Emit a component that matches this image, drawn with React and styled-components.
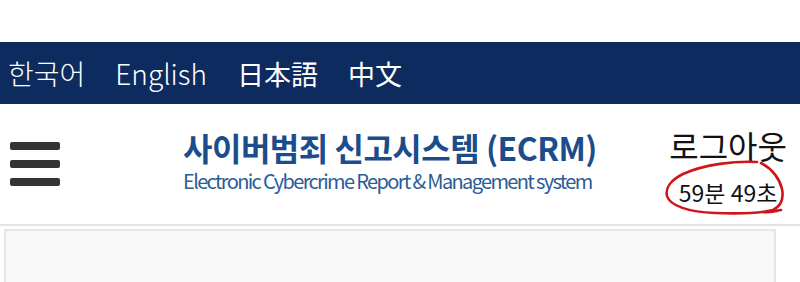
import React from 'react';
import styled, { createGlobalStyle } from 'styled-components';

const GlobalStyle = createGlobalStyle`
    html, body {
        margin: 0;
        padding: 0;
        background: #ffffff;
    }
    body {
        font-family: "Noto Sans CJK KR", "Noto Sans", sans-serif;
        width: 800px;
        height: 282px;
        overflow: hidden;
    }
`

const Page = styled.div`
    display: flex;
    flex-direction: column;
    padding-top: 42px;
`

const LangBar = styled.nav`
    display: flex;
    align-items: center;
    height: 62px;
    padding-left: 8px;
    gap: 30px;
    background-color: #0d2b5e;
`

const LangItem = styled.a`
    color: #ffffff;
    font-size: ${props => (props.cjk ? "27px" : "28px")};
    font-weight: ${props => (props.cjk ? 400 : 300)};
    text-decoration: none;
    line-height: 1;
`

const Header = styled.header`
    display: flex;
    align-items: center;
    height: 120px;
    border-bottom: 2px solid #e3e3e3;
`

const MenuButton = styled.button`
    display: flex;
    flex-direction: column;
    gap: 10px;
    margin-left: 10px;
    padding: 0;
    border: 0;
    background: none;
    width: 50px;
`

const Bar = styled.span`
    display: block;
    height: 8px;
    border-radius: 2px;
    background-color: #333333;
`

const Brand = styled.div`
    display: flex;
    flex-direction: column;
    margin-left: 123px;
    margin-top: -8px;
`

const Title = styled.h1`
    margin: 0;
    font-size: 32px;
    font-weight: 700;
    line-height: 38px;
    color: #1b4c8c;
    letter-spacing: -0.5px;
`

const Subtitle = styled.p`
    margin: 3px 0 0;
    font-family: "Noto Sans CJK KR", sans-serif;
    font-size: 20px;
    line-height: 23px;
    color: #2b5c98;
    letter-spacing: -1.65px;
`

const Account = styled.div`
    position: relative;
    display: flex;
    flex-direction: column;
    align-items: center;
    margin-left: auto;
    margin-right: 13px;
    margin-top: 2px;
`

const Logout = styled.a`
    font-size: 32px;
    line-height: 40px;
    color: #111111;
    text-decoration: none;
`

const Timer = styled.span`
    margin-top: 13px;
    font-size: 23px;
    line-height: 28px;
    color: #111111;
`

const Scribble = styled.svg`
    position: absolute;
    left: -4px;
    top: 36px;
    width: 122px;
    height: 56px;
    overflow: visible;
    pointer-events: none;
`

const Content = styled.main`
    padding: 3px 24px 0 4px;
`

const Panel = styled.section`
    height: 80px;
    background-color: #f8f8f8;
    border: 2px solid #e6e6e6;
`

export default function App() {
    return (
        <>
            <GlobalStyle />
            <Page>
                <LangBar>
                    <LangItem href="#">한국어</LangItem>
                    <LangItem href="#">English</LangItem>
                    <LangItem href="#" cjk>日本語</LangItem>
                    <LangItem href="#" cjk>中文</LangItem>
                </LangBar>
                <Header>
                    <MenuButton aria-label="menu">
                        <Bar />
                        <Bar />
                        <Bar />
                    </MenuButton>
                    <Brand>
                        <Title>사이버범죄 신고시스템 (ECRM)</Title>
                        <Subtitle>Electronic Cybercrime Report &amp; Management system</Subtitle>
                    </Brand>
                    <Account>
                        <Logout href="#">로그아웃</Logout>
                        <Timer>59분 49초</Timer>
                        <Scribble viewBox="0 0 122 56">
                            <path
                                d="M92 1 C70 0 40 3 18 13 C6 19 0 27 2 35 C5 45 24 51 50 52 C75 53 96 52 108 49 C116 45 119 38 117 28 C115 19 108 8 96 2 M98 51 C104 52 110 50 116 49"
                                fill="none"
                                stroke="#d0141a"
                                strokeWidth="2.6"
                                strokeLinecap="round"
                            />
                        </Scribble>
                    </Account>
                </Header>
                <Content>
                    <Panel />
                </Content>
            </Page>
        </>
    );
}
